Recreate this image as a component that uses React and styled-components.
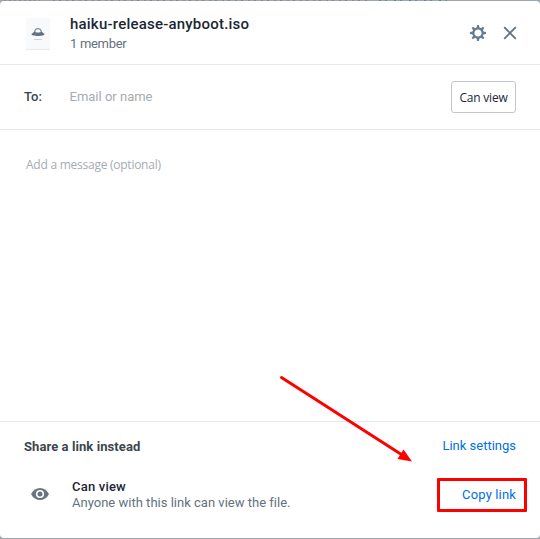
import React from "react";
import styled, { createGlobalStyle } from "styled-components";

const GlobalStyle = createGlobalStyle`
  * { box-sizing: border-box; }
  body { margin: 0; background: #a0a6b1; font-family: Roboto, "Liberation Sans", sans-serif; overflow: hidden; }
  button { font-family: inherit; padding: 0; border: 0; background: none; }
  svg { display: block; flex: none; }
`;

const Backdrop = styled.div`
  position: relative;
  width: 540px;
  height: 539px;
  padding: 1px 0;
  background:
    repeating-linear-gradient(90deg, #a0a6b1 0 7px, #5f7fb8 7px 9px, #a0a6b1 9px 13px, #7287b0 13px 15px) 372px 0 / 78px 1px no-repeat,
    repeating-linear-gradient(90deg, #858d9b 0 2px, #a0a6b1 2px 6px, #7b8799 6px 8px, #a0a6b1 8px 13px) 53px 0 / 315px 1px no-repeat,
    repeating-linear-gradient(90deg, #858d9b 0 2px, #a0a6b1 2px 5px) 4px 0 / 36px 1px no-repeat,
    #a0a6b1;
`;

const Modal = styled.main`
  display: flex;
  flex-direction: column;
  height: 537px;
  background: #fff;
  border-radius: 4px;
  overflow: hidden;
`;

const Header = styled.header`
  display: flex;
  height: 64px;
  padding: 17px 21px 0 26px;
  border-bottom: 1px solid #e6e8eb;
`;

const FileTile = styled.div`
  width: 24px;
  height: 31px;
  background: #f7f9fa;
  border-radius: 1px;
  box-shadow: 0 1px 1px #e6e8eb;
`;

const FileInfo = styled.div`
  flex: 1;
  margin: -3px 0 0 20px;
`;

const Text = styled.div`
  font-family: ${(p) => p.$font || "inherit"};
  font-size: ${(p) => p.$size || 13}px;
  line-height: ${(p) => p.$line || 16}px;
  font-weight: ${(p) => p.$weight || 400};
  letter-spacing: ${(p) => p.$track || 0}px;
  color: ${(p) => p.$color || "#637282"};
  white-space: nowrap;
`;

const HeaderActions = styled.div`
  display: flex;
  align-items: flex-start;
  gap: 14px;
  padding-top: 6px;
`;

const IconButton = styled.button`
  display: flex;
  align-items: center;
  justify-content: center;
  width: 18px;
  height: 18px;
`;

const Recipient = styled.section`
  display: flex;
  align-items: center;
  height: 65px;
  padding: 0 24px;
  border-bottom: 1px solid #e6e8eb;
`;

const ToLabel = styled.div`
  width: 45.5px;
`;

const Permission = styled.button`
  display: flex;
  align-items: center;
  justify-content: center;
  width: 65px;
  height: 32px;
  margin-left: auto;
  padding-top: 1px;
  border: 1px solid #c1c7cd;
  border-radius: 3px;
`;

const Message = styled.section`
  height: 291px;
  padding: 27px 26px;
`;

const ShareLink = styled.footer`
  flex: 1;
  border-top: 1px solid #e6e8eb;
`;

const ShareHeading = styled.div`
  display: flex;
  align-items: flex-end;
  justify-content: space-between;
  height: 33px;
  padding: 0 24px;
`;

const LinkRow = styled.div`
  display: flex;
  align-items: flex-start;
  padding: 15px 13px 0 31px;
`;

const EyeSlot = styled.div`
  width: 41px;
  padding-top: 18px;
`;

const LinkInfo = styled.div`
  flex: 1;
  padding-top: 9px;
`;

const Copy = styled.button`
  display: flex;
  align-items: center;
  justify-content: flex-end;
  width: 90px;
  height: 34px;
  margin-top: 8px;
  padding-right: 8px;
  border: 3px solid #f00;
  border-radius: 1px;
`;

const Arrow = styled.svg`
  position: absolute;
  left: 276px;
  top: 372px;
  pointer-events: none;
`;

const FileIcon = () => (
  <svg width="24" height="31" viewBox="0 0 24 31">
    <path d="M8.7 15C8.7 9.2 15.3 9.2 15.3 15" fill="#f7f9fa" stroke="#8996a4" strokeWidth="1.4" />
    <path d="M8.3 13.8C10 14.8 14 14.8 15.7 13.8L18.6 16C18.6 18.6 5.4 18.6 5.4 16Z" fill="#637282" />
    <path d="M8 21.5h8" stroke="#cbd1d7" />
  </svg>
);

const Gear = () => (
  <svg width="18" height="18" viewBox="-9 -9 18 18">
    <circle r="4.7" fill="none" stroke="#637c94" strokeWidth="2.2" />
    {[0, 45, 90, 135, 180, 225, 270, 315].map((angle) => (
      <path key={angle} d="M-1.5-5L-0.9-8.1H0.9L1.5-5Z" fill="#637c94" transform={`rotate(${angle})`} />
    ))}
  </svg>
);

const Close = () => (
  <svg width="18" height="18" viewBox="0 0 18 18">
    <path d="M3.2 3.2L14.8 14.8M14.8 3.2L3.2 14.8" stroke="#637282" strokeWidth="1.9" />
  </svg>
);

const Eye = () => (
  <svg width="18" height="12" viewBox="0 0 18 12">
    <path d="M0 6C4-2 14-2 18 6C14 14 4 14 0 6Z" fill="#6b7480" />
    <circle cx="9" cy="6" r="3.3" fill="#6b7480" stroke="#fff" strokeWidth="1.6" />
  </svg>
);

export default function App() {
  return (
    <>
      <GlobalStyle />
      <Backdrop>
        <Modal>
          <Header>
            <FileTile><FileIcon /></FileTile>
            <FileInfo>
              <Text $size={15} $line={19} $weight={500} $track={0.21} $color="#1b2733">haiku-release-anyboot.iso</Text>
              <Text $line={20} $track={-0.3}>1 member</Text>
            </FileInfo>
            <HeaderActions>
              <IconButton aria-label="Settings"><Gear /></IconButton>
              <IconButton aria-label="Close"><Close /></IconButton>
            </HeaderActions>
          </Header>
          <Recipient>
            <ToLabel><Text $weight={500} $color="#3d464d">To:</Text></ToLabel>
            <Text $color="#a5abb2">Email or name</Text>
            <Permission><Text as="span" $font='"Open Sans", sans-serif' $size={12} $track={-0.2} $color="#1b2733">Can view</Text></Permission>
          </Recipient>
          <Message><Text $font='"Open Sans", sans-serif' $size={12} $track={-0.25} $color="#a5abb2">Add a message (optional)</Text></Message>
          <ShareLink>
            <ShareHeading>
              <Text $weight={700} $track={0.08} $color="#3d464d">Share a link instead</Text>
              <Text $line={18} $color="#0070e0">Link settings</Text>
            </ShareHeading>
            <LinkRow>
              <EyeSlot><Eye /></EyeSlot>
              <LinkInfo>
                <Text $weight={500} $track={0.2} $color="#1b2733">Can view</Text>
                <Text $line={15} $track={0.01}>Anyone with this link can view the file.</Text>
              </LinkInfo>
              <Copy><Text as="span" $track={0.15} $color="#0070e0">Copy link</Text></Copy>
            </LinkRow>
          </ShareLink>
        </Modal>
        <Arrow width="140" height="94" viewBox="276 372 140 94">
          <path d="M281.5 377.5L403 455.5" stroke="#f00" strokeWidth="3" strokeLinecap="round" />
          <path d="M412 461.5L403.5 449.5L397.5 459Z" fill="#f00" />
        </Arrow>
      </Backdrop>
    </>
  );
}
